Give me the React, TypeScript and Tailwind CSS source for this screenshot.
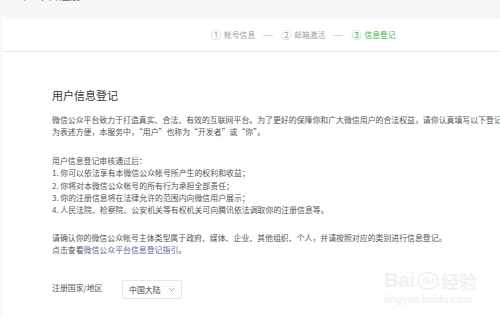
import React from "react";

const font = { fontFamily: '"Noto Sans CJK SC", "Noto Sans", sans-serif' };

function Step({ n, label, active }: { n: string; label: string; active?: boolean }) {
  return (
    <div className={`flex items-center ${active ? "text-[#44b549]" : "text-[#a2a2a2]"}`}>
      <span className="text-[10px] leading-none mr-[3px]">{n}</span>
      <span className="text-[7.8px] leading-none">{label}</span>
    </div>
  );
}

export default function App() {
  return (
    <div className="w-[500px] h-[317px] overflow-hidden bg-[#f6f7f9] relative" style={font}>
      <div className="h-[19px] overflow-hidden pl-[15px]">
        <div className="text-[11px] leading-[11px] text-[#666] -mt-[10px] whitespace-nowrap">公众平台注册</div>
      </div>
      <div className="ml-[2px] w-[520px] h-[300px] bg-white">
        <div className="h-[33px] border-b border-[#e8e8ea] flex items-center pl-[209px] gap-[8px]">
          <Step n="①" label="帐号信息" />
          <div className="w-[10px] h-px bg-[#d8d8d8]" />
          <Step n="②" label="邮箱激活" />
          <div className="w-[10px] h-px bg-[#d8d8d8]" />
          <Step n="③" label="信息登记" active />
        </div>
        <div className="pl-[50px] text-[#353535] whitespace-nowrap">
          <div className="mt-[35px] text-[11px] leading-[16px] text-[#353535]">用户信息登记</div>
          <div className="mt-[11px] text-[7.9px] leading-[12px] text-[#555]">
            <div>微信公众平台致力于打造真实、合法、有效的互联网平台。为了更好的保障你和广大微信用户的合法权益，请你认真填写以下登记信息。</div>
            <div>为表述方便，本服务中，“用户”也称为“开发者”或“你”。</div>
          </div>
          <div className="mt-[17px] text-[7.9px] leading-[12.3px] text-[#555]">
            <div>用户信息登记审核通过后：</div>
            <div>1. 你可以依法享有本微信公众帐号所产生的权利和收益；</div>
            <div>2. 你将对本微信公众帐号的所有行为承担全部责任；</div>
            <div>3. 你的注册信息将在法律允许的范围内向微信用户展示；</div>
            <div>4. 人民法院、检察院、公安机关等有权机关可向腾讯依法调取你的注册信息等。</div>
          </div>
          <div className="mt-[16px] text-[7.9px] leading-[12px] text-[#555]">
            <div>请确认你的微信公众帐号主体类型属于政府、媒体、企业、其他组织、个人，并请按照对应的类别进行信息登记。</div>
            <div>
              点击查看<span className="text-[#576b95]">微信公众平台信息登记指引</span>。
            </div>
          </div>
          <div className="mt-[21px] flex items-center">
            <div className="w-[70px] text-[7.9px] leading-[12px] text-[#555]">注册国家/地区</div>
            <div className="w-[60px] h-[19px] mt-[3px] border border-[#e6e7ea] rounded-[2px] bg-[#fdfdfd] flex items-center pl-[6px] pr-[6px] justify-between">
              <span className="text-[7.9px] text-[#444]">中国大陆</span>
              <svg width="7" height="5" viewBox="0 0 7 5">
                <path d="M1 1 L3.5 3.5 L6 1" fill="none" stroke="#9a9a9a" strokeWidth="0.8" />
              </svg>
            </div>
          </div>
        </div>
      </div>
      <div className="absolute left-[384px] top-[270px] text-[#f1f1f1] pointer-events-none">
        <div className="flex items-end gap-[2px]">
          <span className="text-[20px] font-bold leading-none" style={{ fontFamily: '"Liberation Sans", sans-serif' }}>Bai</span>
          <span className="w-[22px] h-[18px] rounded-full border-2 border-[#f1f1f1] text-[10px] font-bold leading-none flex items-center justify-center" style={{ fontFamily: '"Liberation Sans", sans-serif' }}>du</span>
          <span className="text-[18px] font-bold leading-none">经验</span>
        </div>
        <div className="text-[10px] leading-none mt-[5px] font-bold" style={{ fontFamily: '"Liberation Sans", sans-serif' }}>jingyan.baidu.com</div>
      </div>
    </div>
  );
}
